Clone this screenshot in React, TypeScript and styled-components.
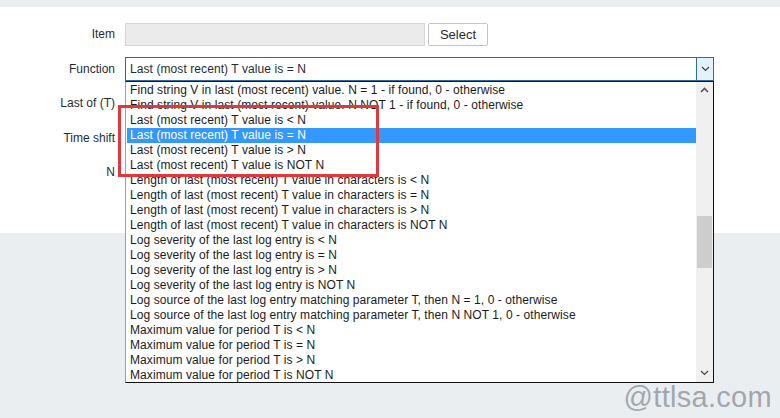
import styled, { createGlobalStyle } from 'styled-components';

const GlobalStyle = createGlobalStyle`
    html, body {
        margin: 0;
        padding: 0;
        background: #ebeef0;
        font-family: "Liberation Sans", Arial, sans-serif;
    }
`;

const options = [
    'Find string V in last (most recent) value. N = 1 - if found, 0 - otherwise',
    'Find string V in last (most recent) value. N NOT 1 - if found, 0 - otherwise',
    'Last (most recent) T value is < N',
    'Last (most recent) T value is = N',
    'Last (most recent) T value is > N',
    'Last (most recent) T value is NOT N',
    'Length of last (most recent) T value in characters is < N',
    'Length of last (most recent) T value in characters is = N',
    'Length of last (most recent) T value in characters is > N',
    'Length of last (most recent) T value in characters is NOT N',
    'Log severity of the last log entry is < N',
    'Log severity of the last log entry is = N',
    'Log severity of the last log entry is > N',
    'Log severity of the last log entry is NOT N',
    'Log source of the last log entry matching parameter T, then N = 1, 0 - otherwise',
    'Log source of the last log entry matching parameter T, then N NOT 1, 0 - otherwise',
    'Maximum value for period T is < N',
    'Maximum value for period T is = N',
    'Maximum value for period T is > N',
    'Maximum value for period T is NOT N',
];

const selected = 'Last (most recent) T value is = N';

const Chevron = ({ up }: { up?: boolean }) => (
    <svg width="9" height="6" viewBox="0 0 9 6">
        <path
            d={up ? 'M1 5 L4.5 1.5 L8 5' : 'M1 1 L4.5 4.5 L8 1'}
            fill="none"
            stroke={up ? '#555' : '#444'}
            strokeWidth={up ? 1.6 : 1.2}
        />
    </svg>
);

const App = () => {
    return (
        <Page>
            <GlobalStyle />
            <TopStrip />
            <Panel>
                <Form>
                    <Label>Item</Label>
                    <FieldRow>
                        <ItemInput readOnly />
                        <Button type="button">Select</Button>
                    </FieldRow>

                    <Label>Function</Label>
                    <SelectWrap>
                        <SelectBox>
                            <SelectText>{selected}</SelectText>
                            <ArrowBox>
                                <Chevron />
                            </ArrowBox>
                        </SelectBox>
                        <DropList>
                            <Options>
                                {options.map((o) => (
                                    <Option key={o} $active={o === selected}>{o}</Option>
                                ))}
                            </Options>
                            <ScrollBar>
                                <ScrollArrow><Chevron up /></ScrollArrow>
                                <Track>
                                    <Thumb />
                                </Track>
                                <ScrollArrow><Chevron /></ScrollArrow>
                            </ScrollBar>
                        </DropList>
                        <Highlight />
                    </SelectWrap>

                    <Label>Last of (T)</Label>
                    <FieldRow />
                    <Label>Time shift</Label>
                    <FieldRow />
                    <Label>N</Label>
                    <FieldRow />
                </Form>
            </Panel>
            <Watermark>@ttlsa.com</Watermark>
        </Page>
    );
};

export default App;

const Page = styled.div`
    position: relative;
    width: 780px;
    height: 418px;
    overflow: hidden;
    background: #ebeef0;
`;

const TopStrip = styled.div`
    height: 7px;
    background: #ebeef0;
`;

const Panel = styled.div`
    height: 226px;
    box-sizing: border-box;
    background: #ffffff;
    padding-top: 15px;
`;

const Form = styled.div`
    display: grid;
    grid-template-columns: 115px 1fr;
    grid-auto-rows: 24px;
    column-gap: 10px;
    row-gap: 10.5px;
`;

const Label = styled.div`
    display: flex;
    align-items: center;
    justify-content: flex-end;
    font-size: 12px;
    color: #1f2c33;
`;

const FieldRow = styled.div`
    display: flex;
    align-items: center;
    gap: 3px;
`;

const ItemInput = styled.input`
    width: 300px;
    height: 23px;
    box-sizing: border-box;
    background: #ebebeb;
    border: 1px solid #d6d6d6;
    margin: 0;
`;

const Button = styled.button`
    width: 60px;
    height: 23px;
    box-sizing: border-box;
    background: #ffffff;
    border: 1px solid #c4c4c4;
    border-radius: 2px;
    font-family: "Liberation Sans", Arial, sans-serif;
    font-size: 13px;
    color: #1f2c33;
    padding: 0;
`;

const SelectWrap = styled.div`
    position: relative;
    width: 589px;
`;

const SelectBox = styled.div`
    display: flex;
    height: 24px;
    box-sizing: border-box;
    border: 1px solid #2b6c9e;
    background: #fff;
`;

const SelectText = styled.div`
    flex: 1;
    display: flex;
    align-items: center;
    padding-left: 4px;
    font-size: 12px;
    letter-spacing: 0.08px;
    color: #1f2c33;
`;

const ArrowBox = styled.div`
    width: 16px;
    display: flex;
    align-items: center;
    justify-content: center;
    background: #e5f1fb;
    border-left: 1px solid #2b6c9e;
`;

const DropList = styled.div`
    position: absolute;
    top: 24px;
    left: 0;
    width: 589px;
    height: 302px;
    box-sizing: border-box;
    display: flex;
    background: #fff;
    border: 1px solid #111;
    border-left-color: #a0a0a0;
    z-index: 2;
`;

const Options = styled.div`
    flex: 1;
    padding: 1px 0 0 1px;
`;

const Option = styled.div<{ $active?: boolean }>`
    height: 15px;
    line-height: 15px;
    padding-left: 3px;
    font-size: 12px;
    letter-spacing: 0.08px;
    white-space: nowrap;
    color: ${(p) => (p.$active ? '#ffffff' : '#1b1b1b')};
    background: ${(p) => (p.$active ? '#3399ff' : 'transparent')};
`;

const ScrollBar = styled.div`
    width: 17px;
    display: flex;
    flex-direction: column;
    background: #f0f0f0;
`;

const ScrollArrow = styled.div`
    height: 17px;
    display: flex;
    align-items: center;
    justify-content: center;
`;

const Track = styled.div`
    flex: 1;
    padding-top: 117px;
`;

const Thumb = styled.div`
    height: 52px;
    margin: 0 1px;
    background: #cdcdcd;
`;

const Highlight = styled.div`
    position: absolute;
    left: -7px;
    top: 48px;
    width: 261px;
    height: 72px;
    box-sizing: border-box;
    border: 3px solid #e0383d;
    z-index: 3;
`;

const Watermark = styled.div`
    position: absolute;
    right: 8px;
    bottom: 4px;
    font-size: 29px;
    color: #a2a7ad;
    letter-spacing: 0.3px;
`;
